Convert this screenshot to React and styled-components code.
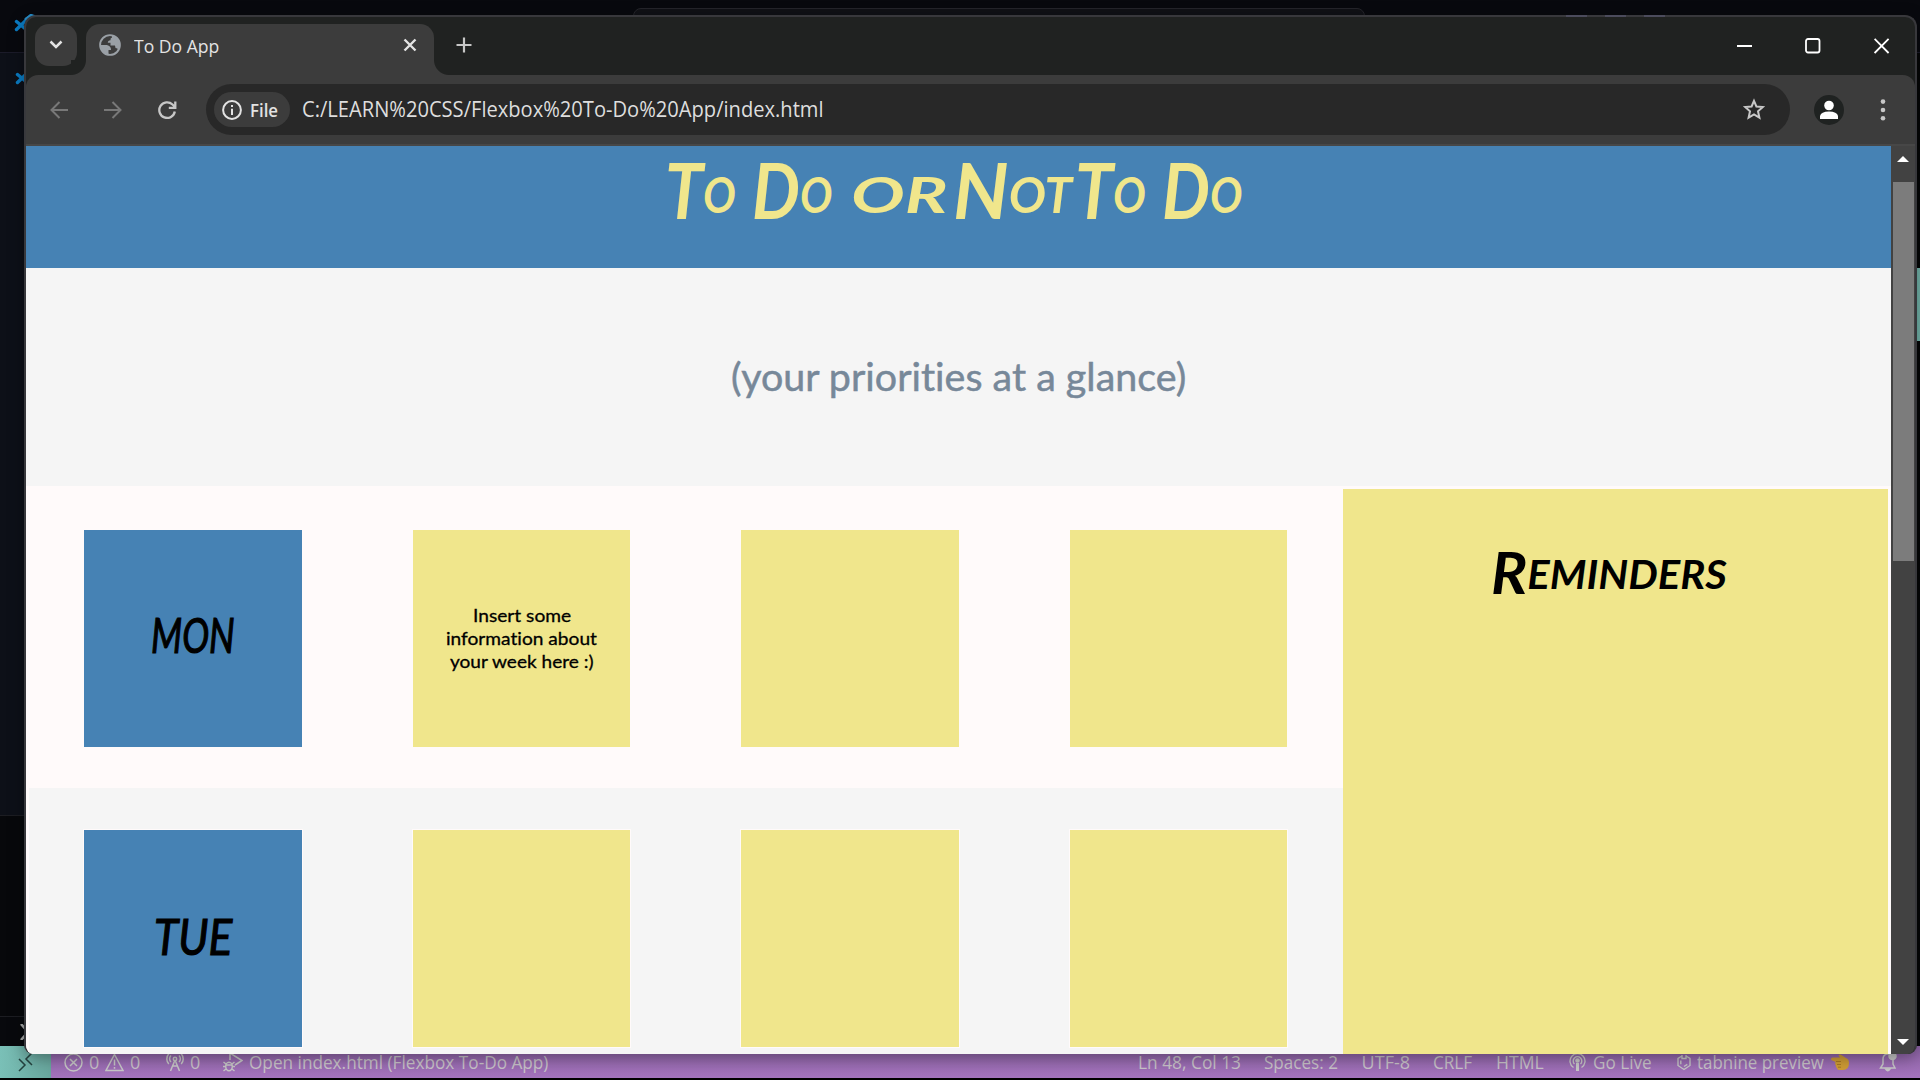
import React, { useLayoutEffect, useRef, useState } from "react";
import styled, { createGlobalStyle } from "styled-components";

const ui = `"Open Sans", "Noto Sans", sans-serif`;
const hand = `Lato, "Open Sans", sans-serif`;

const GlobalStyle = createGlobalStyle`
  * { box-sizing: border-box; }
  html, body { margin: 0; padding: 0; background: #000; }
  body { width: 1920px; height: 1080px; overflow: hidden; font-family: ${ui}; }
  svg { display: block; flex: none; }
`;

/* ---------- text that fills a given width ---------- */
const FitBox = styled.span`
  display: inline-block;
  flex: none;
  width: ${(p) => p.$w}px;
  white-space: nowrap;
  text-align: left;
`;
const FitInner = styled.span`
  display: inline-block;
  transform-origin: 0 50%;
  font-feature-settings: "liga" 0;
`;
function Fit({ w, children, className }) {
  const ref = useRef(null);
  const [scale, setScale] = useState(1);
  useLayoutEffect(() => {
    setScale(w / ref.current.offsetWidth);
  }, [w, children]);
  return (
    <FitBox $w={w} className={className}>
      <FitInner ref={ref} style={{ transform: `scaleX(${scale})` }}>{children}</FitInner>
    </FitBox>
  );
}

/* ---------- editor behind the browser ---------- */
const Desktop = styled.div`
  position: relative;
  width: 1920px;
  height: 1080px;
  overflow: hidden;
  background: #000;
  display: flex;
  flex-direction: column;
`;
const EditorTop = styled.div`
  height: 53px;
  background: #08090e;
  border-bottom: 1px solid #1b1b29;
  padding: 8px 0 0 633px;
`;
const CommandBox = styled.div`
  width: 732px;
  height: 30px;
  border: 1px solid #25252b;
  border-radius: 8px;
  background: #101116;
`;
const EditorMiddle = styled.div`
  flex: 1;
  display: flex;
  justify-content: space-between;
`;
const EditorSide = styled.div`
  width: 60px;
  display: flex;
  flex-direction: column;
`;
const SidePane = styled.div`
  height: ${(p) => p.$h}px;
  background: ${(p) => p.$bg};
  border-bottom: ${(p) => (p.$line ? "1px solid #1c1d22" : "none")};
  padding: ${(p) => p.$pad || 0};
`;
const EditorRight = styled.div`
  width: 8px;
  padding-top: 215px;
  background: #050607;
`;
const MiniMark = styled.div`
  height: 73px;
  background: #72b3a9;
`;
const StatusBar = styled.div`
  height: 32px;
  margin-bottom: 2px;
  flex: none;
  display: flex;
  align-items: center;
  background: linear-gradient(#8d63a5, #a473bd);
  color: #c9c3c9;
  font-size: 18px;
  line-height: 32px;
`;
const Remote = styled.div`
  width: 51px;
  height: 32px;
  padding: 5px 0 0 18px;
  background: linear-gradient(90deg, #7ac0b7, #68a69d);
`;
const StatusItem = styled.div`
  display: flex;
  align-items: center;
  height: 32px;
  margin-left: ${(p) => p.$ml}px;
  gap: ${(p) => p.$gap || 0}px;
`;
const VsLogo = styled.svg`
  position: absolute;
  left: ${(p) => p.$x}px;
  top: ${(p) => p.$y}px;
`;
const LayoutMark = styled.div`
  position: absolute;
  z-index: 3;
  top: 15px;
  left: ${(p) => p.$x}px;
  width: 21px;
  height: 2px;
  background: #4b4b5c;
`;

/* ---------- browser window ---------- */
const Window = styled.div`
  position: absolute;
  left: 24px;
  top: 15px;
  width: 1893px;
  height: 1039px;
  border: 2px solid #38383c;
  border-bottom: 0;
  border-radius: 12px 12px 9px 9px;
  overflow: hidden;
  background: #202221;
  box-shadow: 0 4px 16px rgba(0, 0, 0, 0.35);
  display: flex;
  flex-direction: column;
`;
const TabStrip = styled.div`
  height: 58px;
  flex: none;
  display: flex;
  align-items: flex-start;
  padding: 7px 0 0 9px;
`;
const TabSearch = styled.div`
  width: 42px;
  height: 42px;
  border-radius: 14px;
  background: #3c3c3c;
  display: flex;
  align-items: center;
  justify-content: center;
`;
const Tab = styled.div`
  position: relative;
  margin-left: 9px;
  width: 348px;
  height: 51px;
  border-radius: 14px 14px 0 0;
  background: #3c3c3c;
  display: flex;
  align-items: center;
  padding: 0 17px 9px 13px;
  color: #e3e3e3;
  font-size: 18px;
  &::before, &::after {
    content: "";
    position: absolute;
    bottom: 0;
    width: 15px;
    height: 15px;
  }
  &::before { left: -15px; background: radial-gradient(circle at 0 0, #202221 14.5px, #3c3c3c 15.5px); }
  &::after { right: -15px; background: radial-gradient(circle at 100% 0, #202221 14.5px, #3c3c3c 15.5px); }
`;
const TabTitle = styled.div`
  flex: 1;
  padding-left: 13px;
  line-height: 24px;
  padding-top: 1px;
`;
const NewTab = styled.div`
  margin: 13px 0 0 22px;
`;
const WindowButtons = styled.div`
  margin: 14px 25px 0 auto;
  display: flex;
  align-items: center;
  gap: 53px;
`;
const Toolbar = styled.div`
  height: 71px;
  flex: none;
  background: #3c3c3c;
  border-bottom: 2px solid #474747;
  border-radius: 12px 12px 0 0;
  display: flex;
  align-items: center;
  padding: 0 29px 0 24px;
`;
const NavIcons = styled.div`
  display: flex;
  gap: 36px;
`;
const AddressBar = styled.div`
  margin-left: 29px;
  width: 1584px;
  height: 51px;
  border-radius: 26px;
  background: #282828;
  display: flex;
  align-items: center;
  padding: 0 24px 0 8px;
  color: #dedede;
  font-size: 21px;
`;
const Chip = styled.div`
  width: 76px;
  height: 35px;
  border-radius: 18px;
  background: #3c3c3c;
  display: flex;
  align-items: center;
  padding-left: 8px;
  gap: 8px;
  font-weight: 600;
  font-size: 18px;
  line-height: 24px;
  color: #e3e3e3;
`;
const Url = styled.div`
  flex: 1;
  padding: 0 0 2px 12px;
  line-height: 30px;
`;
const Avatar = styled.div`
  width: 30px;
  height: 30px;
  margin-left: 24px;
  margin-right: auto;
  border-radius: 50%;
  background: #1f2221;
  overflow: hidden;
`;
const Viewport = styled.div`
  height: 908px;
  flex: none;
  display: flex;
`;
const Scrollbar = styled.div`
  width: 24px;
  background: #424242;
  display: flex;
  flex-direction: column;
  padding: 10px 0 9px 2px;
`;
const Arrow = styled.svg`
  margin-left: 4px;
  ${(p) => p.$end && "margin-top: auto;"}
`;
const Thumb = styled.div`
  width: 21px;
  height: 379px;
  margin-top: 20px;
  background: #7c7c7c;
`;

/* ---------- to-do page ---------- */
const Page = styled.div`
  width: 1865px;
  height: 908px;
  background: whitesmoke;
`;
const Banner = styled.header`
  height: 122px;
  background: steelblue;
  color: khaki;
  display: flex;
  padding: 0 0 0 639px;
  font: italic 700 77px/86px ${hand};
  font-variant: small-caps;
`;
const Word = styled(Fit)`
  margin-right: ${(p) => p.gap}px;
`;
const Raised = styled.span`
  font-size: ${(p) => p.$size}px;
  line-height: 0;
  vertical-align: ${(p) => p.$up}px;
`;
const Tagline = styled.div`
  height: 218px;
  display: flex;
  align-items: center;
  justify-content: center;
  background: whitesmoke;
  color: lightslategray;
  font: 400 39px/50px ${hand};
  -webkit-text-stroke: 0.5px lightslategray;
  padding-bottom: 2px;
`;
const Main = styled.main`
  display: flex;
  border: 3px solid snow;
`;
const Week = styled.section`
  width: 1314px;
  margin-top: -1px;
`;
const Day = styled.div`
  height: 300px;
  padding-right: 0.2px;
  display: flex;
  align-items: center;
  justify-content: space-around;
  background: ${(p) => (p.$alt ? "whitesmoke" : "snow")};
`;
const Card = styled.div`
  width: 219.5px;
  height: 219px;
  border: 1px solid snow;
  background: ${(p) => (p.$blue ? "steelblue" : "khaki")};
  display: flex;
  flex-direction: column;
  align-items: center;
  justify-content: center;
  color: #000;
  font: 400 18px/23px ${hand};
  -webkit-text-stroke: 0.3px #000;
`;
const DayName = styled.div`
  font: italic 400 ${(p) => p.$size}px/56px ${hand};
  -webkit-text-stroke: 1.2px #000;
  padding-bottom: ${(p) => p.$pb}px;
`;
const Reminders = styled.aside`
  width: 545px;
  background: khaki;
  padding: 53px 0 0 148px;
  font: italic 700 58px/60px ${hand};
  font-variant: small-caps;
  color: #000;
`;

const Line = ({ w, h, vb, sw = 2, c = "#c7c7c7", children }) => (
  <svg width={w} height={h} viewBox={vb || `0 0 ${w} ${h}`} fill="none" stroke={c} strokeWidth={sw}>
    {children}
  </svg>
);

const Code = ({ x, y }) => (
  <VsLogo $x={x} $y={y} width="24" height="22" viewBox="0 0 24 22" fill="none" strokeLinecap="round">
    <path d="M2.500 7.500 L14 17 M2.500 15.500 L17 1.500" stroke="#0a7cc4" strokeWidth="3.400" />
    <path d="M12 5 L17 1.500 L22 3" stroke="#2a8fca" strokeWidth="3" />
  </VsLogo>
);

export default function App() {
  return (
    <>
      <GlobalStyle />
      <Desktop>
        <EditorTop><CommandBox /></EditorTop>
        <EditorMiddle>
          <EditorSide>
            <SidePane $h={763} $bg="#0d1018" $line />
            <SidePane $h={201} $bg="#07080b" $line />
            <SidePane $h={29} $bg="#08090d" $pad="7px 0 0 20px">
              <Line w={14} h={16} sw={2.6} c="#aaa"><path d="M1 0 L8 8 L1 16" /></Line>
            </SidePane>
          </EditorSide>
          <EditorRight><MiniMark /></EditorRight>
        </EditorMiddle>
        <Code x={14} y={14} />
        <Code x={15} y={67} />
        <StatusBar>
          <Remote>
            <Line w={16} h={22} sw={1.5} c="#24423f"><path d="M1 8 L7 14 L1 20 M14 2 L8 8 L14 14" /></Line>
          </Remote>
          <StatusItem $ml={13} $gap={6}>
            <Line w={19} h={19} sw={1.5}><circle cx="9.5" cy="9.5" r="8.5" /><path d="M6 6 L13 13 M13 6 L6 13" /></Line>
            <Fit w={10}>0</Fit>
            <Line w={19} h={19} sw={1.5}><path d="M9.5 1.5 L18 17.5 H1 Z M9.5 6.5 V12.5 M9.5 14 V15.8" /></Line>
            <Fit w={10}>0</Fit>
          </StatusItem>
          <StatusItem $ml={26} $gap={6}>
            <Line w={18} h={19} sw={1.5}>
              <path d="M9 7 L4.5 18 M9 7 L13.5 18 M6.5 13 H11.5 M5 9 A4.5 4.5 0 0 1 5 2.5 M13 9 A4.5 4.5 0 0 0 13 2.5 M2.8 11 A7.5 7.5 0 0 1 2.8 .8 M15.2 11 A7.5 7.5 0 0 0 15.2 .8" />
              <circle cx="9" cy="6" r="1.7" />
            </Line>
            <Fit w={10}>0</Fit>
          </StatusItem>
          <StatusItem $ml={23} $gap={6}>
            <Line w={20} h={20} sw={1.5}>
              <path d="M7 8 V1 L19 8.5 L12 13" />
              <ellipse cx="6" cy="14.5" rx="3.3" ry="4.2" />
              <path d="M3 13 H9 M0 14.5 H3 M9 14.5 H12 M.5 10 L3 12 M11.5 10 L9 12 M.5 19 L3 17 M11.5 19 L9 17" />
            </Line>
            <Fit w={299}>Open index.html (Flexbox To-Do App)</Fit>
          </StatusItem>
          <StatusItem $ml={589.6}><Fit w={103}>Ln 48, Col 13</Fit></StatusItem>
          <StatusItem $ml={23}><Fit w={74}>Spaces: 2</Fit></StatusItem>
          <StatusItem $ml={24}><Fit w={48}>UTF-8</Fit></StatusItem>
          <StatusItem $ml={23.6}><Fit w={39}>CRLF</Fit></StatusItem>
          <StatusItem $ml={24}><Fit w={48}>HTML</Fit></StatusItem>
          <StatusItem $ml={24.400} $gap={7}>
            <Line w={17} h={19} sw={1.4}>
              <path d="M4.5 14.5 A7.5 7.5 0 1 1 12.5 14.5 M5.5 11 A4.3 4.3 0 1 1 11.5 11" />
              <circle cx="8.5" cy="7.5" r="1.6" fill="#c7c7c7" /><path d="M8.5 10 V18" strokeWidth="3" />
            </Line>
            <Fit w={59}>Go Live</Fit>
          </StatusItem>
          <StatusItem $ml={25} $gap={6}>
            <Line w={14} h={17} sw={1.4}><path d="M5 2 L1 4.500 V11.500 L7 15.500 L13 11.500 V4.500 L9 2 M5 1 V4.500 H9 V1 M3.800 6.500 V10.300 M7 12.500 L10.300 10.300" /></Line>
            <Fit w={127}>tabnine preview</Fit>
            <svg width="20" height="17" viewBox="0 0 20 17" fill="#cf9c35">
              <path d="M1 5 Q1 3.5 2.5 3.5 H10 L8.5 1.5 Q9 -.3 11 .8 L16 4 Q19 5 19 9 Q19 16 13 16 H9 Q7 16 7 14 Q5.500 13 6 11.500 Q4.500 10 5.500 8 L2.500 6.500 Q1 6.500 1 5Z" />
              <path d="M6 7.500 H11 M7 10.500 H11 M8 13.200 H11" stroke="#a87826" />
            </svg>
          </StatusItem>
          <StatusItem $ml={29}>
            <Line w={18} h={21} sw={1.5}>
              <path d="M10 2 H8 Q4 3 4 7 V12 L1.500 16 H16 L14 12 V8" /><path d="M6.500 17 Q8.500 20.500 11 17Z" fill="#c7c7c7" /><circle cx="13.500" cy="4" r="3.500" fill="#c7c7c7" />
            </Line>
          </StatusItem>
        </StatusBar>

        <Window>
          <TabStrip>
            <TabSearch>
              <Line w={14} h={10} sw={2.5} c="#e3e3e3"><path d="M1.500 1.500 L7 7 L12.500 1.500" /></Line>
            </TabSearch>
            <Tab>
              <svg width="22" height="22" viewBox="0 0 22 22">
                <circle cx="11" cy="11" r="9.900" fill="none" stroke="#9aa0a6" strokeWidth="1.900" />
                <path d="M13 1.500 C18 2.500 21 6.500 21 11 C21 13 20.500 14.500 19.500 16 C18.800 14.800 18 14.200 16.500 14 L16 11.500 H11.500 V8.800 H8.800 Q8.800 6.200 11.500 6.200 Q11 4 13 3.500Z" fill="#9aa0a6" />
                <path d="M1.500 11 H6 C10 11 12 12.500 12 16 H9.500 V20.500 C5 20 1.500 16 1.500 11Z" fill="#9aa0a6" />
              </svg>
              <TabTitle><Fit w={85}>To Do App</Fit></TabTitle>
              <Line w={14} h={14} sw={2.4} c="#e3e3e3"><path d="M1.500 1.500 L12.500 12.500 M12.500 1.500 L1.500 12.500" /></Line>
            </Tab>
            <NewTab><Line w={16} h={16} sw={2.2}><path d="M8 .5 V15.500 M.5 8 H15.500" /></Line></NewTab>
            <WindowButtons>
              <Line w={16} h={16} c="#fff"><path d="M1 8 H16" /></Line>
              <Line w={16} h={16} c="#fff" sw={1.800}><rect x="1" y="1" width="13.500" height="13.500" rx="2" /></Line>
              <Line w={16} h={16} c="#fff" sw={1.800}><path d="M.6 .8 L14.600 15 M14.600 .8 L.6 15" /></Line>
            </WindowButtons>
          </TabStrip>
          <Toolbar>
            <NavIcons>
              <Line w={18} h={18} c="#787878"><path d="M18 9 H2 M9.500 1 L1.500 9 L9.500 17" /></Line>
              <Line w={18} h={18} c="#787878"><path d="M0 9 H16 M8.500 1 L16.500 9 L8.500 17" /></Line>
              <Line w={19} h={18} sw={2.300}><path d="M16.800 10.500 A7.800 7.800 0 1 1 14.500 3.500 L17 6 M17.300 .5 V6.800 H10.800" /></Line>
            </NavIcons>
            <AddressBar>
              <Chip>
                <Line w={20} h={20} c="#e3e3e3"><circle cx="10" cy="10" r="8.900" /><path d="M10 8.800 V15 M10 5 V7" /></Line>
                <Fit w={28}>File</Fit>
              </Chip>
              <Url><Fit w={522}>C:/LEARN%20CSS/Flexbox%20To-Do%20App/index.html</Fit></Url>
              <Line w={24} h={23} sw={2}><path d="M12 2.800 L14.400 8.500 L20.800 9.100 L16 13.300 L17.400 19.600 L12 16.300 L6.600 19.600 L8 13.300 L3.200 9.100 L9.600 8.500 Z" /></Line>
            </AddressBar>
            <Avatar>
              <svg width="30" height="30" viewBox="0 0 30 30" fill="#fff"><circle cx="15" cy="10.500" r="4.800" /><path d="M6 24 V21 Q7 16.500 15 16.500 Q23 16.500 24 21 V24Z" /></svg>
            </Avatar>
            <svg width="6" height="22" viewBox="0 0 6 22" fill="#c7c7c7"><circle cx="3" cy="2.600" r="2.300" /><circle cx="3" cy="11" r="2.300" /><circle cx="3" cy="19.300" r="2.300" /></svg>
          </Toolbar>
          <Viewport>
            <Page>
              <Banner>
                <Word w={71} gap={16}>T<Raised $size={70} $up={6}>o</Raised></Word>
                <Word w={80} gap={19}>D<Raised $size={70} $up={6}>o</Raised></Word>
                <Word w={96} gap={6}><Raised $size={70} $up={6}>or</Raised></Word>
                <Word w={119} gap={3}>N<Raised $size={70} $up={6}>ot</Raised></Word>
                <Word w={71} gap={16}>T<Raised $size={70} $up={6}>o</Raised></Word>
                <Word w={80} gap={0}>D<Raised $size={70} $up={6}>o</Raised></Word>
              </Banner>
              <Tagline><Fit w={455}>(your priorities at a glance)</Fit></Tagline>
              <Main>
                <Week>
                  <Day>
                    <Card $blue><DayName $size={49} $pb={8}><Fit w={84}>MON</Fit></DayName></Card>
                    <Card>
                      <Fit w={98}>Insert some</Fit>
                      <Fit w={151}>information about</Fit>
                      <Fit w={144}>your week here :)</Fit>
                    </Card>
                    <Card />
                    <Card />
                  </Day>
                  <Day $alt>
                    <Card $blue><DayName $size={51} $pb={4}><Fit w={78}>TUE</Fit></DayName></Card>
                    <Card />
                    <Card />
                    <Card />
                  </Day>
                </Week>
                <Reminders><Fit w={236}>R<Raised $size={57} $up={5}>eminders</Raised></Fit></Reminders>
              </Main>
            </Page>
            <Scrollbar>
              <Arrow width="12" height="6" viewBox="0 0 12 6" fill="#fff"><path d="M6 0 L12 6 H0Z" /></Arrow>
              <Thumb />
              <Arrow $end width="12" height="6" viewBox="0 0 12 6" fill="#fff"><path d="M0 0 H12 L6 6Z" /></Arrow>
            </Scrollbar>
          </Viewport>
        </Window>
        <LayoutMark $x={1566} />
        <LayoutMark $x={1605} />
        <LayoutMark $x={1644} />
      </Desktop>
    </>
  );
}
